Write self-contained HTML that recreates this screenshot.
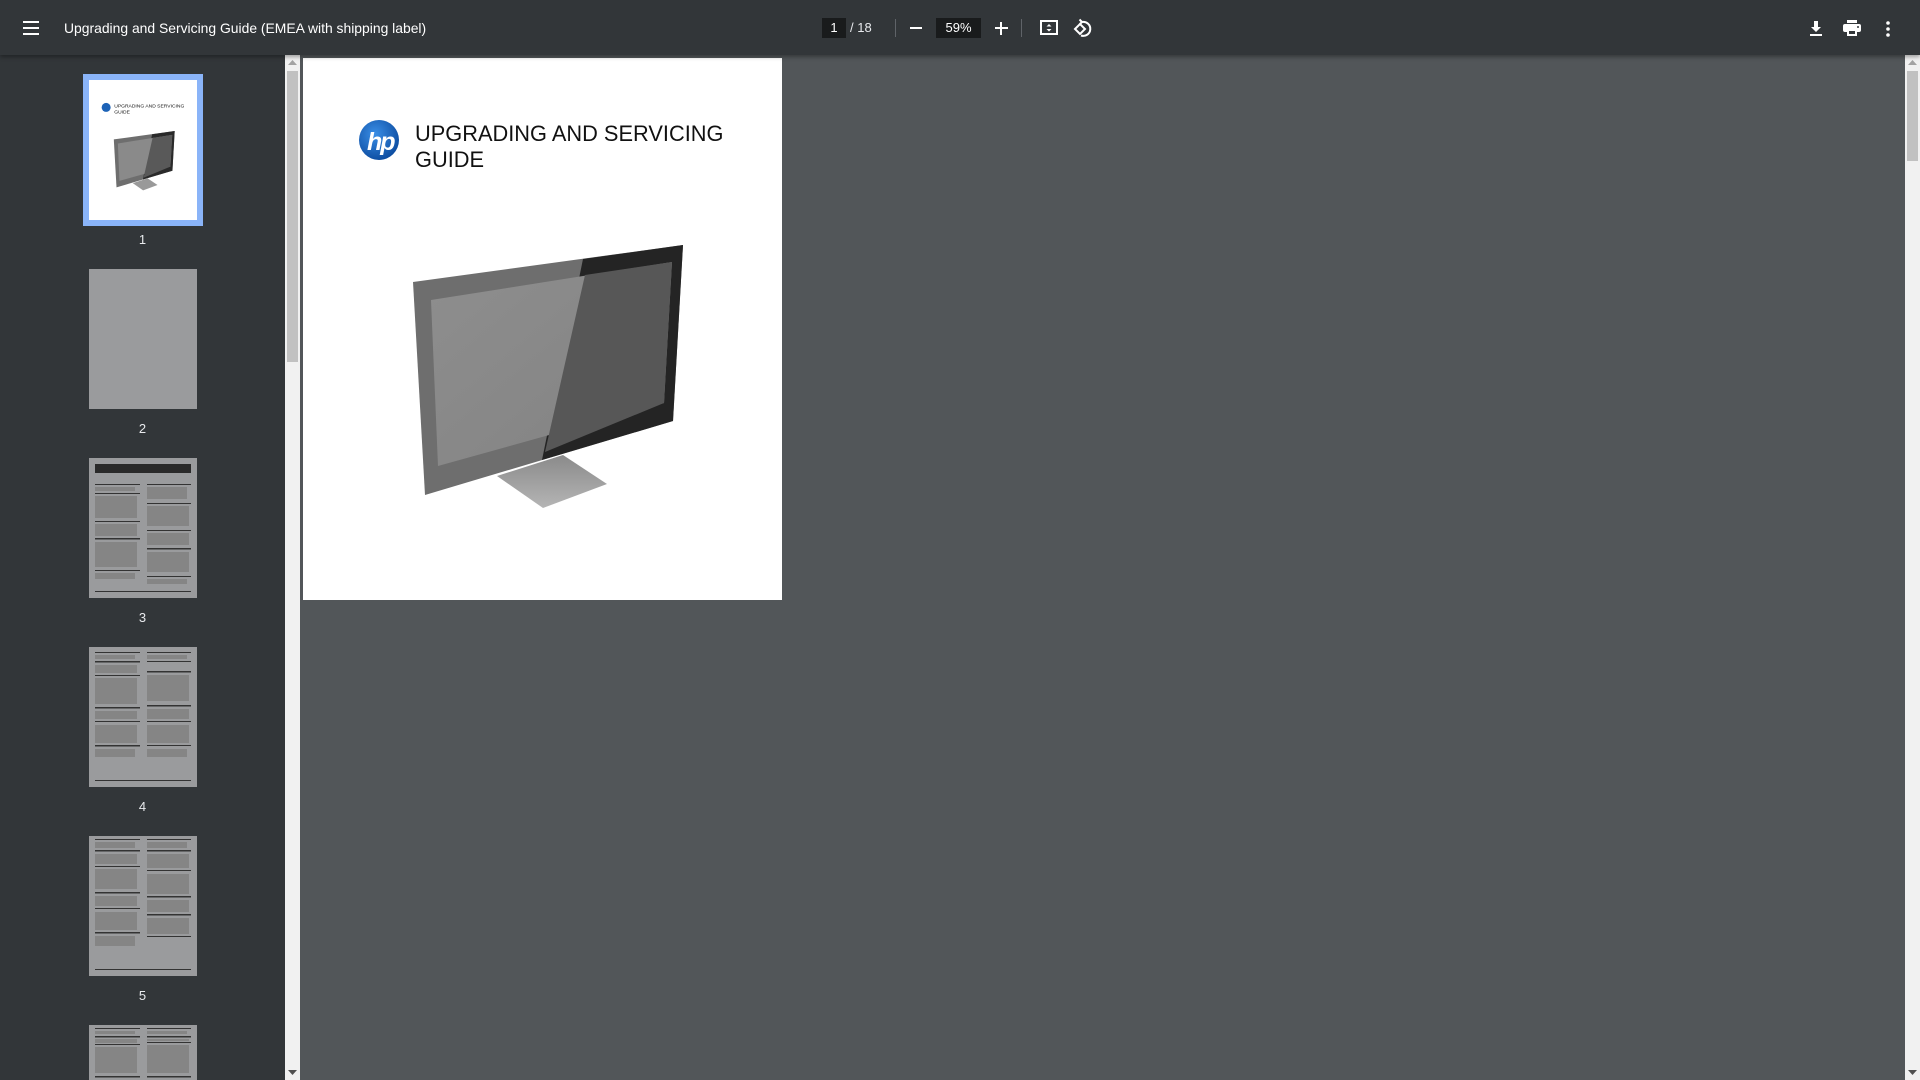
<!DOCTYPE html>
<html><head><meta charset="utf-8"><style>
*{margin:0;padding:0;box-sizing:border-box}
html,body{width:1920px;height:1080px;overflow:hidden;background:#525659;font-family:"Liberation Sans",Arial,sans-serif;position:relative}
#tb{position:absolute;left:0;top:0;width:1920px;height:55px;background:#323639;box-shadow:0 2px 4px rgba(0,0,0,.35);z-index:5;color:#f1f1f1}
#side{position:absolute;left:0;top:55px;width:285px;height:1025px;background:#323639;overflow:hidden}
.thumb{position:absolute;left:89px;width:108px;height:140px;background:#9a9b9d}
.lbl{position:absolute;width:285px;left:0;text-align:center;color:#e8eaed;font-size:13px}
.abs{position:absolute}
</style></head><body>
<div id="tb">
 <svg class="abs" style="left:23px;top:20px" width="18" height="16"><rect y="1" width="16" height="2" fill="#fff"/><rect y="7" width="16" height="2" fill="#fff"/><rect y="13" width="16" height="2" fill="#fff"/></svg>
 <div class="abs" style="left:64px;top:20px;font-size:13.9px;color:#fff">Upgrading and Servicing Guide (EMEA with shipping label)</div>
 <div class="abs" style="left:822px;top:18px;width:24px;height:20px;background:#191b1c;color:#fff;font-size:13px;text-align:center;line-height:20px">1</div>
 <div class="abs" style="left:850px;top:18px;font-size:13px;line-height:20px;color:#e8eaed">/ 18</div>
 <div class="abs" style="left:895px;top:19px;width:1px;height:18px;background:#5f6368"></div>
 <div class="abs" style="left:910px;top:27px;width:12px;height:2px;background:#fff"></div>
 <div class="abs" style="left:936px;top:18px;width:45px;height:20px;background:#191b1c;color:#fff;font-size:13px;text-align:center;line-height:20px">59%</div>
 <div class="abs" style="left:995px;top:27px;width:13px;height:2px;background:#fff"></div>
 <div class="abs" style="left:1000px;top:22px;width:2px;height:13px;background:#fff"></div>
 <div class="abs" style="left:1021px;top:19px;width:1px;height:18px;background:#5f6368"></div>
 <svg class="abs" style="left:1040px;top:20px" width="18" height="16"><rect x="1" y="1" width="16" height="13" fill="none" stroke="#fff" stroke-width="2"/><path d="M9 4l-2.5 2.5h5zM9 11.5l-2.5-2.5h5z" fill="#fff"/></svg>
 <svg class="abs" style="left:1072px;top:18px" width="20" height="20" fill="none" stroke="#fff" stroke-width="2"><path d="M3 11l5-5 5 5-5 5z"/><path d="M10 4a7 7 0 1 1-1 13.5"/><path d="M7.5 1.5L10 4 7.5 6.5"/></svg>
 <svg class="abs" style="left:1809px;top:20px" width="16" height="18"><path d="M5 1h4v6h3l-5 5-5-5h3z" fill="#fff"/><rect x="1" y="14" width="12" height="2" fill="#fff"/></svg>
 <svg class="abs" style="left:1843px;top:20px" width="18" height="17"><rect x="4" y="0" width="10" height="3" fill="#fff"/><rect x="0" y="4" width="18" height="8" rx="2" fill="#fff"/><rect x="4" y="9" width="10" height="7" fill="#fff"/><rect x="6" y="11" width="6" height="3" fill="#323639"/><circle cx="15" cy="7" r="1" fill="#323639"/></svg>
 <svg class="abs" style="left:1886px;top:21px" width="4" height="16" fill="#fff"><circle cx="2" cy="2" r="1.8"/><circle cx="2" cy="8" r="1.8"/><circle cx="2" cy="14" r="1.8"/></svg>
</div>

<div id="side">
 <div class="abs" style="left:83px;top:19px;width:120px;height:152px;background:#8ab4f8"></div>
 <div class="thumb" style="top:25px;background:#fff;overflow:hidden">
  <svg width="108" height="140" viewBox="303 58 479 542">
   <circle cx="379" cy="140" r="20" fill="#1d63b7"/><text x="415" y="141" font-size="22" fill="#111" font-family="Liberation Sans">UPGRADING AND SERVICING</text><text x="415" y="167" font-size="22" fill="#111" font-family="Liberation Sans">GUIDE</text>
   <polygon points="497,476 563,455 607,484 543,508" fill="#999"/><polygon points="413,282 683,245 673,421 425,495" fill="#6e6e6e"/><polygon points="583,259 683,245 673,421 542,460" fill="#2a2a2a"/><polygon points="431,300 672,262 664,403 438,466" fill="#8a8a8a"/><polygon points="585,275 672,262 664,403 545,452" fill="#595959"/></svg>
 </div>
 <div class="lbl" style="top:177px">1</div>
 <div class="thumb" style="top:214px"></div>
 <div class="lbl" style="top:366px">2</div>
 <div class="thumb" style="top:403px"><div class="abs" style="left:6px;top:6px;width:96px;height:9px;background:#2a2a2a"></div><svg class="abs" style="left:0;top:0" width="108" height="140"><g fill="#333"><rect x="6" y="26" width="45" height="1"/><rect x="58" y="26" width="44" height="1"/><rect x="6" y="35" width="45" height="1"/><rect x="58" y="45" width="44" height="1"/><rect x="6" y="63" width="45" height="1"/><rect x="6" y="80" width="45" height="1.5"/><rect x="58" y="72" width="44" height="1"/><rect x="58" y="90" width="44" height="1.5"/><rect x="6" y="112" width="45" height="1"/><rect x="58" y="118" width="44" height="1"/><rect x="6" y="133" width="96" height="1"/></g><g fill="#858585"><rect x="6" y="29" width="40" height="4"/><rect x="58" y="29" width="40" height="12"/><rect x="6" y="38" width="42" height="22"/><rect x="58" y="48" width="42" height="20"/><rect x="6" y="66" width="42" height="12"/><rect x="6" y="84" width="42" height="25"/><rect x="58" y="75" width="42" height="12"/><rect x="58" y="94" width="42" height="20"/><rect x="6" y="115" width="40" height="6"/><rect x="58" y="121" width="40" height="5"/></g></svg></div>
 <div class="lbl" style="top:555px">3</div>
 <div class="thumb" style="top:592px"><svg class="abs" width="108" height="140"><g fill="#333"><rect x="6" y="5" width="45" height="1"/><rect x="58" y="5" width="44" height="1"/><rect x="6" y="14" width="45" height="1.5"/><rect x="58" y="14" width="44" height="1"/><rect x="6" y="28" width="45" height="1"/><rect x="58" y="24" width="44" height="1.5"/><rect x="6" y="60" width="45" height="1.5"/><rect x="58" y="58" width="44" height="1.5"/><rect x="6" y="74" width="45" height="1"/><rect x="58" y="74" width="44" height="1"/><rect x="6" y="98" width="45" height="1.5"/><rect x="58" y="98" width="44" height="1"/><rect x="6" y="133" width="96" height="1"/></g><g fill="#858585"><rect x="6" y="8" width="40" height="4"/><rect x="58" y="8" width="40" height="4"/><rect x="6" y="18" width="42" height="8"/><rect x="58" y="28" width="42" height="26"/><rect x="6" y="31" width="42" height="26"/><rect x="6" y="64" width="42" height="8"/><rect x="58" y="62" width="42" height="10"/><rect x="6" y="78" width="42" height="18"/><rect x="58" y="78" width="42" height="18"/><rect x="6" y="102" width="40" height="8"/><rect x="58" y="102" width="40" height="8"/></g></svg></div>
 <div class="lbl" style="top:744px">4</div>
 <div class="thumb" style="top:781px"><svg class="abs" width="108" height="140"><g fill="#333"><rect x="6" y="3" width="45" height="1"/><rect x="58" y="3" width="44" height="1"/><rect x="6" y="14" width="45" height="1.5"/><rect x="58" y="14" width="44" height="1.5"/><rect x="6" y="30" width="45" height="1"/><rect x="58" y="34" width="44" height="1"/><rect x="6" y="56" width="45" height="1.5"/><rect x="58" y="60" width="44" height="1.5"/><rect x="6" y="72" width="45" height="1"/><rect x="58" y="78" width="44" height="1.5"/><rect x="6" y="96" width="45" height="1.5"/><rect x="58" y="100" width="44" height="1"/><rect x="6" y="133" width="96" height="1"/></g><g fill="#858585"><rect x="6" y="6" width="40" height="6"/><rect x="58" y="6" width="40" height="6"/><rect x="6" y="18" width="42" height="10"/><rect x="58" y="18" width="42" height="14"/><rect x="6" y="33" width="42" height="20"/><rect x="58" y="38" width="42" height="20"/><rect x="6" y="60" width="42" height="10"/><rect x="58" y="64" width="42" height="12"/><rect x="6" y="76" width="42" height="18"/><rect x="58" y="82" width="42" height="16"/><rect x="6" y="100" width="40" height="10"/></g></svg></div>
 <div class="lbl" style="top:933px">5</div>
 <div class="thumb" style="top:970px"><svg class="abs" width="108" height="140"><g fill="#333"><rect x="6" y="3" width="45" height="1"/><rect x="58" y="3" width="44" height="1"/><rect x="6" y="11" width="45" height="1.5"/><rect x="58" y="11" width="44" height="1.5"/><rect x="6" y="19" width="45" height="1"/><rect x="58" y="17" width="44" height="1"/><rect x="6" y="51" width="45" height="1.5"/><rect x="58" y="51" width="44" height="1.5"/></g><g fill="#858585"><rect x="6" y="6" width="40" height="3"/><rect x="58" y="6" width="40" height="3"/><rect x="6" y="14" width="42" height="4"/><rect x="58" y="14" width="42" height="2"/><rect x="6" y="22" width="42" height="26"/><rect x="58" y="20" width="42" height="28"/></g></svg></div>
</div>
<div class="abs" style="left:285px;top:55px;width:15px;height:1025px;background:#f1f1f1"></div>
<div class="abs" style="left:287px;top:71px;width:11px;height:291px;background:#c1c1c1"></div>
<svg class="abs" style="left:288px;top:60px" width="9" height="6"><path d="M0 5L4.5 0 9 5z" fill="#a3a3a3"/></svg>
<svg class="abs" style="left:288px;top:1070px" width="9" height="6"><path d="M0 0L4.5 5 9 0z" fill="#505050"/></svg>

<div class="abs" style="left:303px;top:58px;width:479px;height:542px;background:#fff;overflow:hidden">
 <svg width="479" height="542" viewBox="303 58 479 542" style="position:absolute;left:0;top:0">
  <defs><radialGradient id="g" cx="40%" cy="35%" r="70%"><stop offset="0" stop-color="#3a8ee6"/><stop offset="1" stop-color="#0b4a9e"/></radialGradient>
  <linearGradient id="st" x1="0" y1="0" x2="0" y2="1"><stop offset="0" stop-color="#8a8a8a"/><stop offset="1" stop-color="#b5b5b5"/></linearGradient>
  <linearGradient id="sl" x1="0" y1="0" x2="1" y2="1"><stop offset="0" stop-color="#8e8e8e"/><stop offset="1" stop-color="#828282"/></linearGradient></defs>
  <circle cx="379" cy="140" r="20" fill="url(#g)"/>
  <text x="367" y="150" font-size="25" font-style="italic" font-weight="bold" fill="#fff" font-family="Liberation Sans" letter-spacing="-2">hp</text>
  <text x="415" y="141" font-size="21.8" fill="#111" font-family="Liberation Sans">UPGRADING AND SERVICING</text>
  <text x="415" y="167" font-size="21.8" fill="#111" font-family="Liberation Sans">GUIDE</text>
  <polygon points="497,476 563,455 607,484 543,508" fill="url(#st)"/>
  <polygon points="413,282 683,245 673,421 425,495" fill="#6e6e6e"/>
  <polygon points="583,259 683,245 673,421 542,460" fill="#242424"/>
  <polygon points="431,300 672,262 664,403 438,466" fill="url(#sl)"/>
  <polygon points="585,275 672,262 664,403 545,452" fill="#575757"/>
 </svg>
</div>

<div class="abs" style="left:1905px;top:55px;width:15px;height:1025px;background:#f1f1f1"></div>
<div class="abs" style="left:1907px;top:71px;width:11px;height:90px;background:#c1c1c1"></div>
<svg class="abs" style="left:1908px;top:60px" width="9" height="6"><path d="M0 5L4.5 0 9 5z" fill="#a3a3a3"/></svg>
<svg class="abs" style="left:1908px;top:1070px" width="9" height="6"><path d="M0 0L4.5 5 9 0z" fill="#505050"/></svg>
</body></html>
